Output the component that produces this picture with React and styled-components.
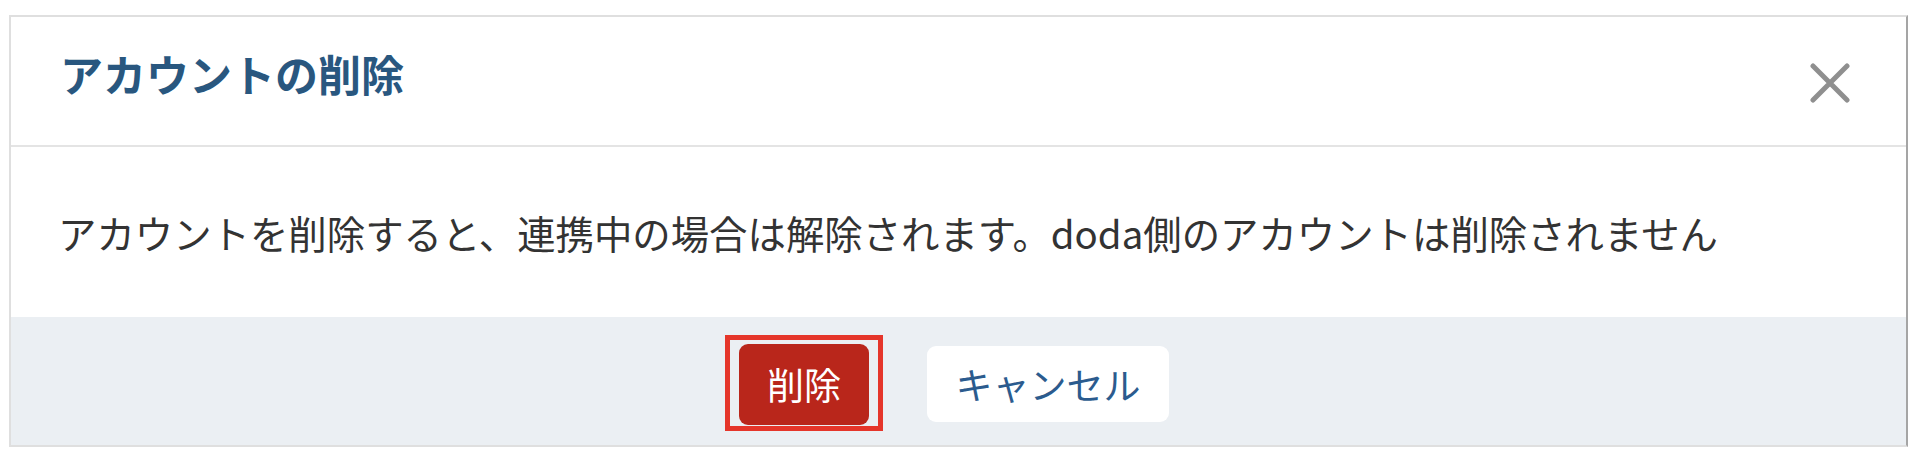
import styled, { createGlobalStyle } from "styled-components";

const GlobalStyle = createGlobalStyle`
  html, body {
    margin: 0;
    padding: 0;
    background: #ffffff;
  }
  body {
    font-family: "Noto Sans CJK JP", "Noto Sans", sans-serif;
  }
`;

export default function App() {
  return (
    <>
      <GlobalStyle />
      <Modal>
        <Header>
          <Title>アカウントの削除</Title>
          <CloseButton aria-label="閉じる">
            <svg width="40" height="40" viewBox="0 0 40 40">
              <path
                d="M3 3 L37 37 M37 3 L3 37"
                stroke="#8f8f8f"
                strokeWidth="5"
                strokeLinecap="round"
              />
            </svg>
          </CloseButton>
        </Header>
        <Body>
          <Message>
            アカウントを削除すると、連携中の場合は解除されます。doda側のアカウントは削除されません
          </Message>
        </Body>
        <Footer>
          <Highlight>
            <Button $danger>削除</Button>
          </Highlight>
          <Button>キャンセル</Button>
        </Footer>
      </Modal>
    </>
  );
}

const Modal = styled.div`
  margin: 15px 0 0 9px;
  width: 1899px;
  box-sizing: border-box;
  border: 2px solid #dfdfdf;
  border-right-color: #a5a5a5;
  background: #ffffff;
`;

const Header = styled.div`
  height: 130px;
  box-sizing: border-box;
  padding: 0 56px 16px 49px;
  display: flex;
  align-items: center;
  justify-content: space-between;
  border-bottom: 2px solid #e4e4e4;
`;

const Title = styled.h1`
  margin: 0;
  font-size: 43px;
  line-height: 1;
  font-weight: 700;
  color: #29577f;
`;

const CloseButton = styled.button`
  border: none;
  background: none;
  padding: 0;
  width: 40px;
  height: 40px;
  margin-top: 20px;
  display: flex;
  cursor: pointer;
`;

const Body = styled.div`
  height: 170px;
  box-sizing: border-box;
  padding: 0 47px;
  display: flex;
  align-items: center;
`;

const Message = styled.p`
  margin: 0;
  font-size: 38.4px;
  line-height: 1;
  color: #333333;
`;

const Footer = styled.div`
  height: 128px;
  box-sizing: border-box;
  padding: 6px 9px 0 0;
  background: #ebeff3;
  display: flex;
  align-items: center;
  justify-content: center;
  gap: 58px;
`;

const Highlight = styled.div`
  position: relative;
  display: flex;

  &::after {
    content: "";
    position: absolute;
    top: -9px;
    left: -14px;
    right: -14px;
    bottom: -6px;
    border: 5px solid #e5352a;
    pointer-events: none;
  }
`;

const Button = styled.button`
  font-family: "Noto Sans CJK JP", "Noto Sans", sans-serif;
  font-size: 37px;
  line-height: 1;
  border: none;
  border-radius: 9px;
  cursor: pointer;
  display: flex;
  align-items: center;
  justify-content: center;
  width: ${(p) => (p.$danger ? "130px" : "242px")};
  height: ${(p) => (p.$danger ? "81px" : "76px")};
  background: ${(p) => (p.$danger ? "#b9261b" : "#ffffff")};
  color: ${(p) => (p.$danger ? "#ffffff" : "#2b5b8e")};
`;
